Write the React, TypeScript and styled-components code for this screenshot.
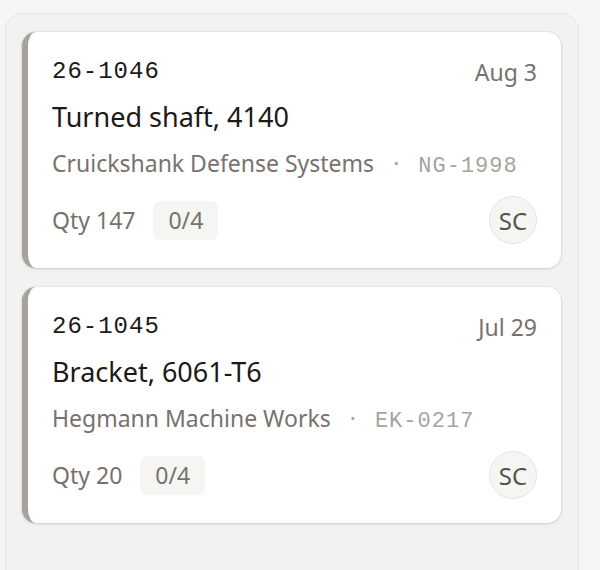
import React from 'react';
import styled, { createGlobalStyle } from 'styled-components';

const GlobalStyle = createGlobalStyle`
  html, body {
    margin: 0;
    background: #f6f6f5;
  }
  body {
    font-family: "Noto Sans", "Open Sans", sans-serif;
    color: #1c1917;
  }
`;

type Job = {
  id: string;
  date: string;
  title: string;
  customer: string;
  part: string;
  qty: number;
  ops: string;
  owner: string;
};

const jobs: Job[] = [
  {
    id: '26-1046',
    date: 'Aug 3',
    title: 'Turned shaft, 4140',
    customer: 'Cruickshank Defense Systems',
    part: 'NG-1998',
    qty: 147,
    ops: '0/4',
    owner: 'SC',
  },
  {
    id: '26-1045',
    date: 'Jul 29',
    title: 'Bracket, 6061-T6',
    customer: 'Hegmann Machine Works',
    part: 'EK-0217',
    qty: 20,
    ops: '0/4',
    owner: 'SC',
  },
];

const App = () => (
  <Page>
    <GlobalStyle />
    <Column>
      {jobs.map((job) => (
        <JobCard key={job.id} job={job} />
      ))}
    </Column>
  </Page>
);

const JobCard = ({ job }: { job: Job }) => (
  <Card>
    <Header>
      <JobId>{job.id}</JobId>
      <Due>{job.date}</Due>
    </Header>
    <Title>{job.title}</Title>
    <Meta>
      <span>{job.customer}</span>
      <Dot>·</Dot>
      <PartNo>{job.part}</PartNo>
    </Meta>
    <Footer>
      <Qty>Qty {job.qty}</Qty>
      <Ops>{job.ops}</Ops>
      <Avatar>{job.owner}</Avatar>
    </Footer>
  </Card>
);

const Page = styled.div`
  padding: 13px 21px 0 5px;
  height: 570px;
  box-sizing: border-box;
  overflow: hidden;
`;

const Column = styled.div`
  display: flex;
  flex-direction: column;
  gap: 19px;
  min-height: 620px;
  padding: 18px 17px 18px 16px;
  background: #f2f2f0;
  border: 1px solid #e6e5e3;
  border-radius: 18px;
`;

const Card = styled.div`
  display: flex;
  flex-direction: column;
  padding: 25px 24px 24px 24px;
  background: #fff;
  border-left: 6px solid #a8a29e;
  border-radius: 14px;
  box-shadow: 0 1px 3px rgba(28, 25, 23, 0.14), 0 0 0 1px rgba(28, 25, 23, 0.04);
`;

const Header = styled.div`
  display: flex;
  justify-content: space-between;
  align-items: flex-start;
  line-height: 30px;
`;

const JobId = styled.span`
  font-family: "Liberation Mono", monospace;
  font-size: 24px;
  letter-spacing: 1px;
  color: #1c1917;
`;

const Due = styled.span`
  font-size: 23px;
  color: #78716c;
`;

const Title = styled.div`
  margin-top: 13px;
  font-size: 27px;
  line-height: 34px;
  color: #1c1917;
`;

const Meta = styled.div`
  display: flex;
  align-items: baseline;
  margin-top: 14px;
  font-size: 23px;
  line-height: 30px;
  color: #78716c;
`;

const Dot = styled.span`
  margin: 0 19px;
  color: #a8a29e;
`;

const PartNo = styled.span`
  font-family: "Liberation Mono", monospace;
  font-size: 22px;
  letter-spacing: 1px;
  color: #a8a29e;
`;

const Footer = styled.div`
  display: flex;
  align-items: center;
  gap: 18px;
  margin-top: 14px;
  height: 48px;
`;

const Qty = styled.span`
  font-size: 23px;
  color: #78716c;
`;

const Ops = styled.span`
  height: 39px;
  padding: 0 15px;
  font-size: 23px;
  line-height: 39px;
  color: #78716c;
  background: #f5f5f4;
  border-radius: 7px;
`;

const Avatar = styled.span`
  margin-left: auto;
  width: 46px;
  height: 46px;
  display: flex;
  align-items: center;
  justify-content: center;
  font-size: 24px;
  color: #57534e;
  background: #f5f5f4;
  border: 1px solid #e7e5e4;
  border-radius: 50%;
`;

export default App;
